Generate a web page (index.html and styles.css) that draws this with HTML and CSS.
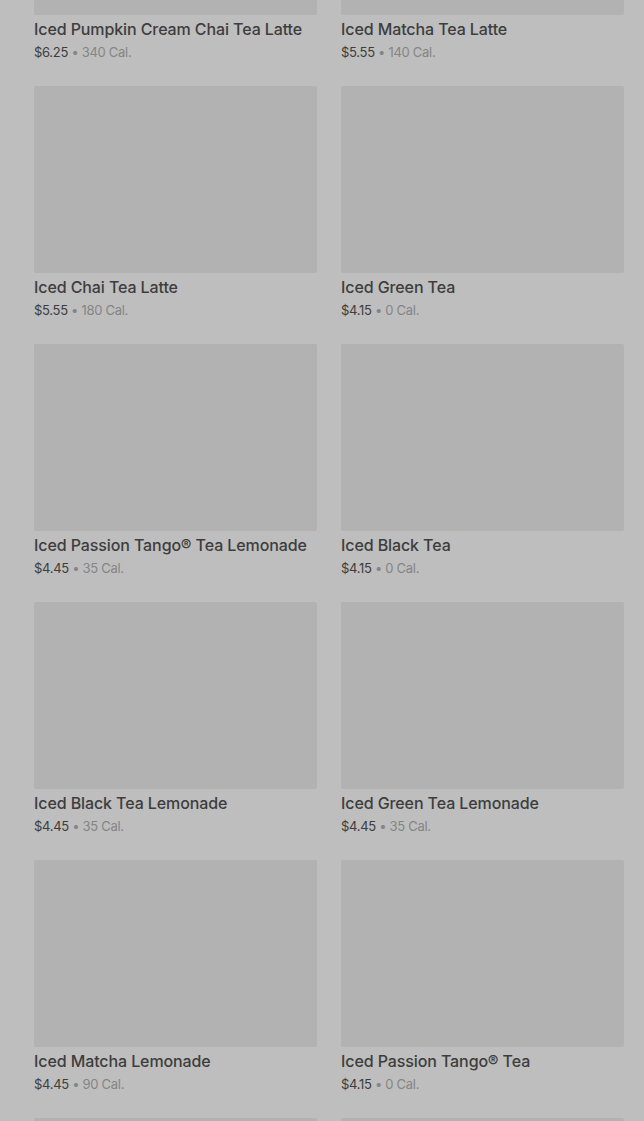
FILE: index.html
```html
<!DOCTYPE html>
<html lang="en">
<head>
    <meta charset="UTF-8">
    <meta name="viewport" content="width=device-width, initial-scale=1.0">
    <title>Iced Teas</title>
    <link rel="stylesheet" href="styles.css">
</head>
<body>

    <div class="menu-grid">
        <div class="item">
            <div class="thumb"></div>
            <div class="name">Iced Pumpkin Cream Chai Tea Latte</div>
            <div class="meta"><span class="price">$6.25</span> &bull; 340 Cal.</div>
        </div>
        <div class="item">
            <div class="thumb"></div>
            <div class="name">Iced Matcha Tea Latte</div>
            <div class="meta"><span class="price">$5.55</span> &bull; 140 Cal.</div>
        </div>
        <div class="item">
            <div class="thumb"></div>
            <div class="name">Iced Chai Tea Latte</div>
            <div class="meta"><span class="price">$5.55</span> &bull; 180 Cal.</div>
        </div>
        <div class="item">
            <div class="thumb"></div>
            <div class="name">Iced Green Tea</div>
            <div class="meta"><span class="price">$4.15</span> &bull; 0 Cal.</div>
        </div>
        <div class="item">
            <div class="thumb"></div>
            <div class="name">Iced Passion Tango® Tea Lemonade</div>
            <div class="meta"><span class="price">$4.45</span> &bull; 35 Cal.</div>
        </div>
        <div class="item">
            <div class="thumb"></div>
            <div class="name">Iced Black Tea</div>
            <div class="meta"><span class="price">$4.15</span> &bull; 0 Cal.</div>
        </div>
        <div class="item">
            <div class="thumb"></div>
            <div class="name">Iced Black Tea Lemonade</div>
            <div class="meta"><span class="price">$4.45</span> &bull; 35 Cal.</div>
        </div>
        <div class="item">
            <div class="thumb"></div>
            <div class="name">Iced Green Tea Lemonade</div>
            <div class="meta"><span class="price">$4.45</span> &bull; 35 Cal.</div>
        </div>
        <div class="item">
            <div class="thumb"></div>
            <div class="name">Iced Matcha Lemonade</div>
            <div class="meta"><span class="price">$4.45</span> &bull; 90 Cal.</div>
        </div>
        <div class="item">
            <div class="thumb"></div>
            <div class="name">Iced Passion Tango® Tea</div>
            <div class="meta"><span class="price">$4.15</span> &bull; 0 Cal.</div>
        </div>
        <!-- next row, only the image tops show -->
        <div class="item">
            <div class="thumb"></div>
        </div>
        <div class="item">
            <div class="thumb"></div>
        </div>
    </div>

</body>
</html>
```

FILE: styles.css
```css
body {
    margin: 0;
    background-color: #bebebe;
    font-family: Inter, "Open Sans", sans-serif;
    overflow: hidden;
}
.menu-grid {
    display: grid;
    grid-template-columns: 283px 283px;
    column-gap: 24px;
    row-gap: 25px;
    padding: 0 20px 0 34px;
    margin-top: -172px;
}
.thumb {
    height: 187px;
    background-color: #b2b2b2;
    border-radius: 2px;
}
.name {
    margin-top: 4px;
    font-size: 16px;
    line-height: 20px;
    font-weight: 500;
    letter-spacing: -0.1px;
    color: #3d3d3d;
    white-space: nowrap;
}
.meta {
    margin-top: 4px;
    font-size: 13px;
    line-height: 18px;
    letter-spacing: -0.3px;
    color: #858585;
}
.price {
    color: #3d3d3d;
}
```
